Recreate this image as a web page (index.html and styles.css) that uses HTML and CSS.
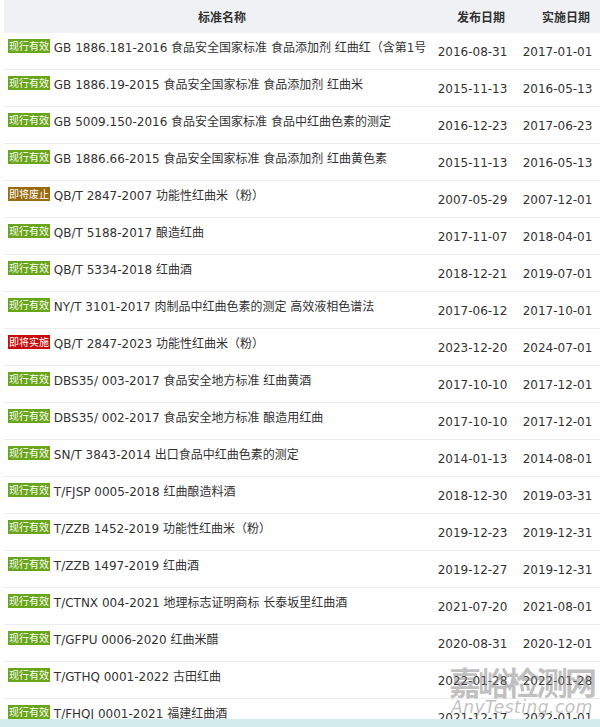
FILE: index.html
```html
<!DOCTYPE html>
<html lang="zh">
<head>
<meta charset="utf-8">
<title>红曲相关标准</title>
<link rel="stylesheet" href="styles.css">
</head>
<body>
<div class="table">
  <div class="row head">
    <div class="h-name">标准名称</div>
    <div class="h-date">发布日期</div>
    <div class="h-date">实施日期</div>
  </div>
  <div class="row"><div class="name"><span class="tag ok">现行有效</span> GB 1886.181-2016 食品安全国家标准 食品添加剂 红曲红（含第1号修改单）</div><div class="date">2016-08-31</div><div class="date">2017-01-01</div></div>
  <div class="row"><div class="name"><span class="tag ok">现行有效</span> GB 1886.19-2015 食品安全国家标准 食品添加剂 红曲米</div><div class="date">2015-11-13</div><div class="date">2016-05-13</div></div>
  <div class="row"><div class="name"><span class="tag ok">现行有效</span> GB 5009.150-2016 食品安全国家标准 食品中红曲色素的测定</div><div class="date">2016-12-23</div><div class="date">2017-06-23</div></div>
  <div class="row"><div class="name"><span class="tag ok">现行有效</span> GB 1886.66-2015 食品安全国家标准 食品添加剂 红曲黄色素</div><div class="date">2015-11-13</div><div class="date">2016-05-13</div></div>
  <div class="row"><div class="name"><span class="tag old">即将废止</span> QB/T 2847-2007 功能性红曲米（粉）</div><div class="date">2007-05-29</div><div class="date">2007-12-01</div></div>
  <div class="row"><div class="name"><span class="tag ok">现行有效</span> QB/T 5188-2017 酿造红曲</div><div class="date">2017-11-07</div><div class="date">2018-04-01</div></div>
  <div class="row"><div class="name"><span class="tag ok">现行有效</span> QB/T 5334-2018 红曲酒</div><div class="date">2018-12-21</div><div class="date">2019-07-01</div></div>
  <div class="row"><div class="name"><span class="tag ok">现行有效</span> NY/T 3101-2017 肉制品中红曲色素的测定 高效液相色谱法</div><div class="date">2017-06-12</div><div class="date">2017-10-01</div></div>
  <div class="row"><div class="name"><span class="tag new">即将实施</span> QB/T 2847-2023 功能性红曲米（粉）</div><div class="date">2023-12-20</div><div class="date">2024-07-01</div></div>
  <div class="row"><div class="name"><span class="tag ok">现行有效</span> DBS35/ 003-2017 食品安全地方标准 红曲黄酒</div><div class="date">2017-10-10</div><div class="date">2017-12-01</div></div>
  <div class="row"><div class="name"><span class="tag ok">现行有效</span> DBS35/ 002-2017 食品安全地方标准 酿造用红曲</div><div class="date">2017-10-10</div><div class="date">2017-12-01</div></div>
  <div class="row"><div class="name"><span class="tag ok">现行有效</span> SN/T 3843-2014 出口食品中红曲色素的测定</div><div class="date">2014-01-13</div><div class="date">2014-08-01</div></div>
  <div class="row"><div class="name"><span class="tag ok">现行有效</span> T/FJSP 0005-2018 红曲酿造料酒</div><div class="date">2018-12-30</div><div class="date">2019-03-31</div></div>
  <div class="row"><div class="name"><span class="tag ok">现行有效</span> T/ZZB 1452-2019 功能性红曲米（粉）</div><div class="date">2019-12-23</div><div class="date">2019-12-31</div></div>
  <div class="row"><div class="name"><span class="tag ok">现行有效</span> T/ZZB 1497-2019 红曲酒</div><div class="date">2019-12-27</div><div class="date">2019-12-31</div></div>
  <div class="row"><div class="name"><span class="tag ok">现行有效</span> T/CTNX 004-2021 地理标志证明商标 长泰坂里红曲酒</div><div class="date">2021-07-20</div><div class="date">2021-08-01</div></div>
  <div class="row"><div class="name"><span class="tag ok">现行有效</span> T/GFPU 0006-2020 红曲米醋</div><div class="date">2020-08-31</div><div class="date">2020-12-01</div></div>
  <div class="row"><div class="name"><span class="tag ok">现行有效</span> T/GTHQ 0001-2022 古田红曲</div><div class="date">2022-01-28</div><div class="date">2022-01-28</div></div>
  <div class="row"><div class="name"><span class="tag ok">现行有效</span> T/FHQJ 0001-2021 福建红曲酒</div><div class="date">2021-12-17</div><div class="date">2022-01-01</div></div>
</div>
<div class="watermark">
  <div class="wm-cn">嘉峪检测网</div>
  <div class="wm-en">AnyTesting.com</div>
</div>
<div class="bottom-bar"></div>
</body>
</html>
```
FILE: styles.css
```css
html, body {
  margin: 0;
  padding: 0;
  background: #fff;
  overflow: hidden;
}
body {
  font-family: "DejaVu Sans", "Noto Sans CJK SC", sans-serif;
  font-size: 12px;
  color: #333;
}
.table {
  margin-left: 4px;
  width: 596px;
}
.row {
  display: grid;
  grid-template-columns: 426px 85px 85px;
  height: 37px;
  box-sizing: border-box;
  border-bottom: 1px solid #ececec;
}
.row.head {
  height: 33px;
  background: #eff1f5;
  border-bottom: none;
  font-weight: bold;
  align-items: center;
  font-family: "Noto Sans CJK SC", sans-serif;
}
.h-name {
  text-align: center;
  padding-left: 10px;
}
.h-date {
  text-align: center;
  padding-left: 17px;
}
.name {
  padding: 5px 0 0 4px;
  height: 20px;
  line-height: 20px;
  overflow: hidden;
}
.date {
  align-self: center;
  text-align: center;
  padding-top: 2px;
}
.tag {
  display: inline-block;
  height: 14px;
  line-height: 14px;
  padding: 0 1px;
  font-size: 10px;
  color: #fff;
  vertical-align: 2px;
  font-family: "Noto Sans CJK SC", sans-serif;
}
.tag.ok { background: #68a518; }
.tag.old { background: #9a6a10; }
.tag.new { background: #c80a0a; }
.watermark {
  position: absolute;
  left: 449px;
  top: 661px;
  color: rgba(130, 130, 130, 0.5);
  pointer-events: none;
}
.wm-cn {
  font-family: "Noto Sans CJK SC", sans-serif;
  font-weight: bold;
  font-size: 32px;
  line-height: 40px;
  letter-spacing: -3px;
}
.wm-en {
  font-family: "DejaVu Sans", sans-serif;
  font-style: italic;
  font-size: 17px;
  line-height: 16px;
  letter-spacing: 0.5px;
  margin-left: 2px;
  margin-top: -2px;
}
.bottom-bar {
  position: fixed;
  left: 0;
  right: 0;
  bottom: 0;
  height: 8px;
  background: #d3ebed;
}
```
